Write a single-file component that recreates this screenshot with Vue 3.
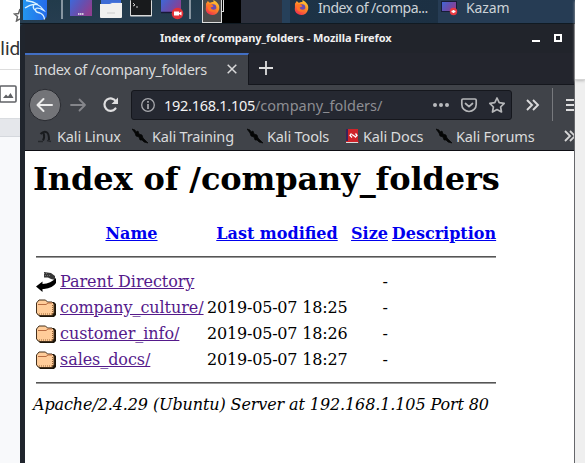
<script setup>
const bookmarks = [
  { label: 'Kali Linux', icon: 'dragon', cls: 'bm-linux' },
  { label: 'Kali Training', icon: 'slash', cls: 'bm-training' },
  { label: 'Kali Tools', icon: 'slash', cls: 'bm-tools' },
  { label: 'Kali Docs', icon: 'docs', cls: 'bm-docs' },
  { label: 'Kali Forums', icon: 'slash', cls: 'bm-forums' },
]
const entries = [
  { name: 'Parent Directory', date: '', parent: true },
  { name: 'company_culture/', date: '2019-05-07 18:25' },
  { name: 'customer_info/', date: '2019-05-07 18:26' },
  { name: 'sales_docs/', date: '2019-05-07 18:27' },
]
</script>

<template>
  <div class="screen">
    <svg width="0" height="0" class="defs">
      <defs>
        <linearGradient id="shot" x1="0" y1="0" x2="1" y2="0.5">
          <stop offset="0" stop-color="#3e68d8" /><stop offset="0.55" stop-color="#6550b0" /><stop offset="1" stop-color="#8d3f91" />
        </linearGradient>
        <linearGradient id="flame" x1="0.8" y1="0" x2="0.2" y2="1">
          <stop offset="0" stop-color="#ffd43a" /><stop offset="0.45" stop-color="#ff8a25" /><stop offset="1" stop-color="#ee2851" />
        </linearGradient>
        <linearGradient id="kali" x1="0" y1="0" x2="1" y2="0">
          <stop offset="0" stop-color="#2396f0" /><stop offset="1" stop-color="#256bea" />
        </linearGradient>
        <symbol id="firefox" viewBox="0 0 16 16">
          <path d="M1 4 3 1 5 3C7 2 8 2 9 2L9 0C14 3 16 6 15 10 14 14 11 16 8 16 3 16 0 12 1 8Z" fill="url(#flame)" />
          <circle cx="8.5" cy="8" r="3.6" fill="#6a4cb4" />
          <path d="M3 5C6 4 8 5 9 7L6 8C7 11 10 11 12 9 12 13 5 14 3 9Z" fill="#ff7424" />
        </symbol>
      </defs>
    </svg>

    <aside class="left">
      <div class="doc-head">
        <svg class="bgstar" width="7" height="14" viewBox="0 0 7 14"><path d="M7 1 5.500 5.500 1.500 6 4.500 8.500 3.500 13 7 11" fill="none" stroke="#666" stroke-width="1.500" /></svg>
        <span class="slide">Slid</span>
      </div>
      <div class="doc-tools">
        <svg width="17" height="18" viewBox="0 0 17 18"><rect x="0" y="1" width="16" height="16" rx="1" fill="none" stroke="#606266" stroke-width="1.600" /><path d="M3 13 6 9.500 8 11.500 10.500 8 13.500 13Z" fill="#5f6165" /></svg>
      </div>
      <div class="doc-ruler"></div>
    </aside>

    <main class="window">
      <header class="taskbar">
        <svg class="launchers" width="182" height="24" viewBox="0 0 182 24">
          <path d="M3 0H27V14Q27 20 21 20H3Z" fill="url(#kali)" />
          <path d="M6 .5Q12 1 18 4.500M5 8Q11 3.500 17 4.500Q21 6 24 10.500L20 8.500Q15 7 15.500 10.500Q16 12.500 20 13Q24 14.500 24.500 19.500M15.500 10.500Q12 8 14 5" fill="none" stroke="#d9f1ff" stroke-width="1.300" />
          <path d="M42 0V19" stroke="#8795a0" stroke-width="2" />
          <rect x="50" y="0" width="22" height="16" fill="url(#shot)" /><path d="M58 14H64" stroke="#eee" stroke-width="1.500" stroke-dasharray="1.500 .5" />
          <path d="M81 0H101V5H81Z" fill="#4c78dc" /><path d="M80 4H90L92 3H102V17Q102 18 101 18H81Q80 18 80 17Z" fill="#f0f0ee" /><path d="M81 0H101V2H91L89 4H81Z" fill="#3e6dd5" /><path d="M87 13H95" stroke="#ccc" />
          <rect x="110" y="0" width="22" height="16.500" rx="1" fill="#d9dada" /><rect x="111" y="0" width="20" height="15" fill="#181a1c" /><path d="M113 3 115 5 113 6M116 7H118" fill="none" stroke="#ccc" />
          <rect x="141" y="0" width="20" height="13" fill="url(#shot)" /><path d="M141 12.500H158" stroke="#191938" stroke-width="1.500" />
          <circle cx="157.500" cy="13.500" r="5.800" fill="#e33138" /><path d="M154 11.500H159V15.500H154ZM159 13 161.500 11.500V15.500L159 14Z" fill="#fff" />
          <path d="M170 0V19" stroke="#8795a0" stroke-width="2" />
        </svg>
        <div class="pager"><div class="desk"><svg width="15" height="15"><use href="#firefox" /></svg></div><div class="desk-b"><i></i></div><div class="desk-c"></div></div>
        <div class="task active"><svg width="15" height="15"><use href="#firefox" /></svg><span class="t-fx">Index of /compa...</span></div>
        <div class="task kz">
          <svg width="17" height="16" viewBox="0 0 17 16"><rect x=".5" y="1.500" width="15" height="10" fill="url(#shot)" stroke="#171d37" /><circle cx="12.500" cy="11.500" r="3.700" fill="#e83941" /><path d="M10.500 11.500H14.500M12.500 10V13" stroke="#fff" stroke-width="1.600" /></svg>
          <span class="t-kz">Kazam</span>
        </div>
      </header>

      <div class="frame">
        <div class="titlebar">
          <span class="title">Index of /company_folders - Mozilla Firefox</span>
          <svg class="winbtns" width="32" height="10" viewBox="0 0 32 10"><path d="M0 8H8" stroke="#fff" stroke-width="2" /><rect x="23" y="2" width="6" height="6" fill="none" stroke="#fff" stroke-width="2" /></svg>
        </div>
        <div class="tabs">
          <div class="tab"><span class="t-tab">Index of /company_folders</span>
            <svg width="10" height="10" viewBox="0 0 10 10"><path d="M.7.7 9.300 9.300M9.300.7.7 9.300" stroke="#d9d9da" stroke-width="1.500" /></svg>
          </div>
          <svg class="plus" width="14" height="14" viewBox="0 0 14 14"><path d="M7 0V14M0 7H14" stroke="#dedede" stroke-width="1.800" /></svg>
        </div>
        <nav class="nav">
          <svg class="navicons" width="100" height="34" viewBox="0 0 100 34">
            <circle cx="20" cy="17" r="15.700" fill="#737478" stroke="#292b31" />
            <g fill="none" stroke="#ececec" stroke-width="2" stroke-linecap="round" stroke-linejoin="round"><path d="M27 17H13M18.500 11 12.500 17 18.500 23" /></g>
            <path d="M46 17H60M54.500 11.500 60 17 54.500 22.500" fill="none" stroke="#85868b" stroke-width="1.800" stroke-linecap="round" stroke-linejoin="round" />
            <path d="M91 13.500A6.200 6.200 0 1 0 90.500 20.500" fill="none" stroke="#dfdfe0" stroke-width="2.200" stroke-linecap="round" /><path d="M93 9.500V16H86.500Z" fill="#dfdfe0" />
          </svg>
          <div class="url">
            <svg width="14" height="14" viewBox="0 0 14 14"><circle cx="7" cy="7" r="6.300" fill="none" stroke="#a8a9ae" stroke-width="1.300" /><path d="M7 6V11M7 3V4.700" stroke="#a8a9ae" stroke-width="1.700" /></svg>
            <span class="addr">192.168.1.105<span class="path">/company_folders/</span></span>
            <svg class="urlicons" width="74" height="18" viewBox="0 0 74 18">
              <g fill="#b9babd"><circle cx="3" cy="9" r="2" /><circle cx="9" cy="9" r="2" /><circle cx="15" cy="9" r="2" /></g>
              <g fill="none" stroke="#b5b6b9" stroke-width="1.700" stroke-linejoin="round" stroke-linecap="round"><path d="M31 3H43Q44.200 3 44.200 4.200V8.500A7.200 7 0 0 1 29.800 8.500V4.200Q29.800 3 31 3ZM33.500 7.500 37 10.700 40.500 7.500" /><path d="M65 2 67.200 6.700 72.200 7.400 68.600 11 69.500 16 65 13.600 60.500 16 61.400 11 57.800 7.400 62.800 6.700Z" /></g>
            </svg>
          </div>
          <svg class="overflow" width="49" height="34" viewBox="0 0 49 34"><path d="M2 12 7 17 2 22M8 12 13 17 8 22" fill="none" stroke="#dadadb" stroke-width="1.900" /><path d="M27.500 0V33" stroke="#77797d" /><path d="M41 12H50M41 17H50M41 22H50" stroke="#dededf" stroke-width="1.800" /></svg>
        </nav>
        <div class="bookmarks">
          <div v-for="b in bookmarks" :key="b.label" class="bm" :class="b.cls">
            <svg v-if="b.icon === 'dragon'" width="16" height="16" viewBox="0 0 16 16"><path d="M3.500 6Q7 2.500 10 4.500Q12 6 12 12M6.500 5Q8 9 6 12.500" fill="none" stroke="#191b1e" stroke-width="2" /><path d="M1 13.500H6M10 12.500 14 13.500" stroke="#25282c" stroke-width="1.500" /></svg>
            <svg v-else-if="b.icon === 'slash'" width="16" height="16" viewBox="0 0 16 16"><path d="M0 1 3 2 4 4 6 3 7 6 10 7 11 10 16 15 12 14 10 12 8 12 7 9 4 8 3 5Z" fill="#050606" stroke="#050606" stroke-width=".7" /></svg>
            <svg v-else width="13" height="16" viewBox="0 0 13 16"><path d="M0 1H12V12L13 15H0Z" fill="#ce2329" /><path d="M1 1V13" stroke="#37235a" stroke-width="2" /><path d="M0 14.500H12" stroke="#ddd" stroke-width="1" /><path d="M5.500 5.500 4 7.500 6 9.500M9.500 5.500 11 7.500 9 9.500M6 6.500 9 8.500" fill="none" stroke="#fff" stroke-width="1.300" /></svg>
            <span>{{ b.label }}</span>
          </div>
          <svg class="more" width="10" height="12" viewBox="0 0 10 12"><path d="M1 1 6 6 1 11M6 1 11 6 6 11" fill="none" stroke="#d5d5d6" stroke-width="1.800" /></svg>
        </div>
        <article class="page">
          <h1>Index of /company_folders</h1>
          <div class="listing">
            <div class="row head"><span></span><span><a>Name</a></span><span><a>Last modified</a></span><span><a>Size</a></span><span><a>Description</a></span></div>
            <div class="rule"></div>
            <div v-for="e in entries" :key="e.name" class="row">
              <svg v-if="e.parent" width="20" height="22" viewBox="0 0 20 22"><path d="M8 1 15 2 19 5 19 9 15 8 12 6.500H8Z" fill="#383838" /><path d="M8 2.500H12M9 4.500H14M9 6.500H12" stroke="#999" stroke-width=".6" stroke-dasharray="1 1" /><path d="M20 7V12Q17 17 8 18H6.500V21L0 15.500 6.500 10.500V13Q15 12.500 20 7Z" fill="#000" /></svg>
              <svg v-else width="20" height="22" viewBox="0 0 20 22"><path d="M3 5H18L20 7V18L18 20H4L1 17V7Z" fill="#1c1408" /><path d="M.5 6 3 3H9.500L11.500 5H16L18 7V16L16 18.500H3L.5 16Z" fill="#ffcc99" stroke="#44301d" /><path d="M2 7.500H10L12 6H16" fill="none" stroke="#b86b40" /><path d="M3 17H16M16.500 8V17" stroke="#996634" stroke-dasharray="1 1" /></svg>
              <a>{{ e.name }}</a><span class="date">{{ e.date }}</span><span class="size">-</span><span></span>
            </div>
            <div class="rule bottom"></div>
          </div>
          <address>Apache/2.4.29 (Ubuntu) Server at 192.168.1.105 Port 80</address>
        </article>
      </div>
    </main>
    <aside class="right"><div></div></aside>
  </div>
</template>

<style>
body { overflow: hidden; background: #fff; }
</style>
<style scoped>
* { box-sizing: border-box; }
svg { display: block; flex-shrink: 0; }
.defs { position: absolute; }
.screen { width: 585px; height: 463px; display: grid; grid-template-columns: 20px 555px 10px; overflow: hidden; font-family: "Noto Sans", sans-serif; }
.screen > * { min-width: 0; }
.left { background: #f8f9fb; overflow: hidden; }
.doc-head { height: 70px; background: #fff; border-bottom: 1px solid #ddd; overflow: hidden; }
.bgstar { margin: 8px 0 0 13px; }
.slide { display: block; margin: 15px 0 0 -11px; font: 19px/24px Roboto, sans-serif; color: #333; }
.doc-tools { height: 48px; padding-top: 15px; background: #fff; }
.doc-ruler { height: 19px; background: #e5e7eb; border-top: 1px solid #d9dce0; border-bottom: 1px solid #d5d8dd; }
.right { background: #efefef; }
.right div { height: 80px; background: #fff; border-bottom: 1px solid #d5d5d5; box-shadow: 0 1px 3px #bbb; }
.window { display: flex; flex-direction: column; height: 463px; background: #223b4b; }
.taskbar { height: 24px; display: flex; background: linear-gradient(#223b4b, #263d50); border-bottom: 1px solid #101a22; color: #ccd2d7; font-size: 14px; line-height: 16px; }
.pager { display: flex; width: 80px; height: 23px; }
.desk { width: 20px; border: 1px solid #ddd; border-top: 0; background: #4c4c4c; padding-left: 2px; }
.desk-b { width: 19px; background: #000; }
.desk-b i { display: block; width: 2px; height: 12px; border-right: 1px solid #ddd; border-bottom: 1px solid #ddd; }
.desk-c { flex: 1; background: #2c303c; }
.task { display: flex; height: 23px; white-space: nowrap; }
.active { width: 156px; padding-left: 12px; background: linear-gradient(90deg, #26405a 0 8px, #1d3346 8px, #1c3043); }
.active span { margin-left: 9px; letter-spacing: -0.5px; }
.kz { flex: 1; background: #263c54; padding-left: 3px; }
.kz span { margin-left: 8px; letter-spacing: -0.1px; }
.frame { flex: 1; display: flex; flex-direction: column; min-height: 0; border-left: 5px solid #20252d; border-right: 1px solid #66676b; border-top-left-radius: 4px; background: #21242b; }
.titlebar { height: 29px; display: flex; justify-content: space-between; padding: 0 10px 0 135px; color: #f0f0f0; font-size: 11px; font-weight: 700; line-height: 28px; letter-spacing: -0.07px; white-space: nowrap; }
.winbtns { margin-top: 9px; }
.tabs { height: 32px; display: flex; background: #23252d; border-bottom: 1px solid #15171d; }
.tab { width: 224px; height: 32px; background: #404349; border-top: 2px solid #426fc4; border-right: 1px solid #15171d; display: flex; align-items: center; justify-content: space-between; padding: 0 11px 2px 9px; color: #d9dadb; font-size: 14.500px; letter-spacing: -0.36px; white-space: nowrap; }
.plus { margin: 8px 0 0 10px; }
.nav { height: 38px; display: flex; background: #404349; padding-top: 3px; }
.navicons { margin-right: 6px; }
.url { width: 381px; height: 30px; margin-top: 2px; border: 1px solid #15171d; border-radius: 3px; background: #252831; display: flex; align-items: center; padding: 0 5px 0 9px; color: #f3f3f3; font-size: 14.500px; white-space: nowrap; }
.addr { margin-left: 9px; letter-spacing: -0.28px; }
.path { color: #8d8e93; letter-spacing: 0; }
.urlicons { margin-left: auto; }
.overflow { margin-left: auto; }
.bookmarks { height: 28px; display: flex; align-items: center; background: #404349; border-bottom: 1px solid #0e0e14; padding: 0 0 2px 12px; color: #dadbdc; font-size: 14.500px; letter-spacing: -0.15px; overflow: hidden; white-space: nowrap; }
.bm { display: flex; align-items: center; gap: 4px; flex: none; }
.bm-linux { width: 95px; }
.bm-training { width: 115px; }
.bm-tools { width: 99px; }
.bm-docs { width: 89px; gap: 4px; }
.bm-forums svg { margin-left: 1px; }
.bookmarks .more { margin-left: auto; }
.page { flex: 1; background: #fff; padding: 9px 0 0 8px; font: 16px/20px "DejaVu Serif", serif; color: #000; min-height: 0; }
h1 { font-size: 32px; line-height: 38px; margin: 0; letter-spacing: -0.12px; white-space: nowrap; }
.listing { width: 463px; padding: 23px 0 0 3px; }
.row { display: grid; grid-template-columns: 20px 143px 140px 37px 104px; gap: 4px; align-items: center; height: 26px; white-space: nowrap; }
.row a { text-decoration: underline; color: #551a8b; letter-spacing: -0.06px; }
.row.head { justify-items: center; font-weight: 700; }
.row.head a { color: #0000ee; letter-spacing: 0; }
.date { letter-spacing: -0.19px; }
.size { justify-self: end; }
.rule { height: 2px; margin: 9px 0 11px; background: #555; border-bottom: 1px solid #999; }
.rule.bottom { margin: 9px 0 0; }
address { font-style: italic; line-height: 20px; margin-top: 11px; letter-spacing: -0.11px; white-space: nowrap; }
</style>
